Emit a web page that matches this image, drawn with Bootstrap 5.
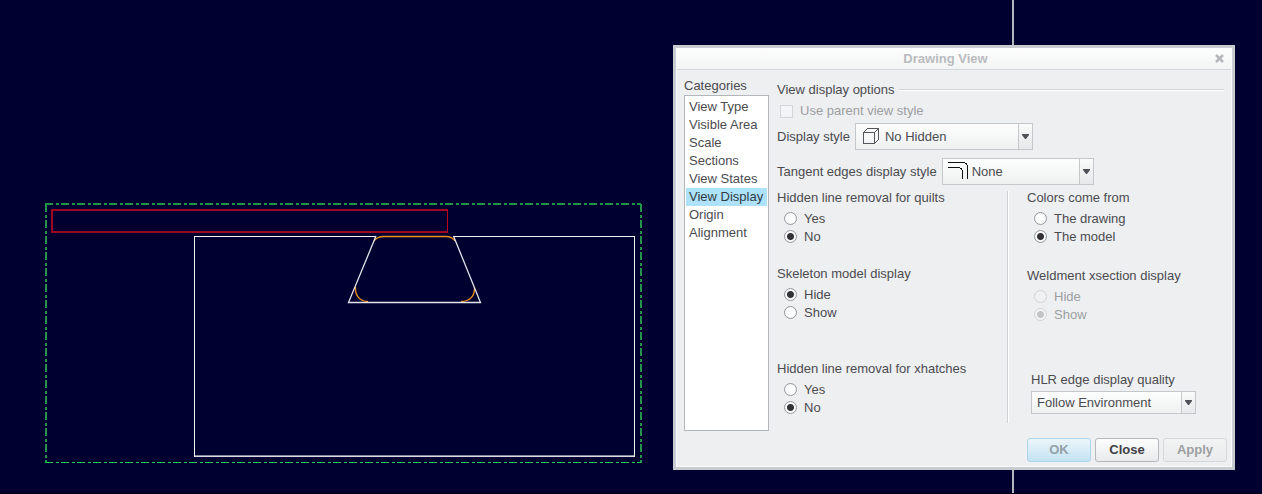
<!DOCTYPE html>
<html lang="en">
<head>
<meta charset="utf-8">
<meta name="viewport" content="width=device-width, initial-scale=1">
<title>Drawing View</title>
<link href="https://cdn.jsdelivr.net/npm/bootstrap@5.3.0/dist/css/bootstrap.min.css" rel="stylesheet">
<style>
  body { background: #000030; color: #4b4b50; font: 13px/18px "Liberation Sans", Arial, sans-serif; }
  .sheet { border-bottom: 1px solid #00000c; }
  .sheet-art { inset: 0; }
  .dialog-window { left: 673px; top: 45px; width: 562px; background: #eeeff1; border: 3px solid #c8ccd0; box-shadow: inset 0 0 0 1px #fafbfb; }
  .title-bar { height: 22px; margin: 0 1px; background: linear-gradient(#fdfdfd, #f3f4f4); border-bottom: 1px solid #d5d8da; color: #b9bbbf; }
  .title-bar h1 { font-size: 13px; line-height: 22px; }
  .close-x { width: 17px; border: 0; background: none; }
  .dialog-main { gap: 8px; padding: 7px 8px 7px; }
  .category-pane { width: 85px; }
  .category-list { min-height: 336px; background: #fff; border: 1px solid #b3b7bb; border-radius: 0; padding: 2px 1px; }
  .category-list .list-group-item { padding: 0 0 0 3px; border: 0; border-radius: 0; line-height: 18px; color: inherit; background: none; white-space: nowrap; }
  .category-list .list-group-item.active { background: #aee1fa; color: #2f3c45; margin: 0; }
  .options-pane { padding-top: 4px; }
  .etched-line { height: 2px; margin-left: 4px; background: linear-gradient(#d3d6d9 50%, #fff 50%); }
  .faded { color: #9c9ea1; }
  .parent-style { margin-top: 3px; padding-left: 3px; gap: 7px; }
  .box-input { width: 13px; height: 13px; margin: 0; border: 1px solid #d3d6d8; border-radius: 0 !important; background: #f3f4f5; opacity: 1 !important; }
  .style-row { gap: 5px; height: 27px; }
  .row-a { margin-top: 3px; }
  .row-b { margin-top: 8px; }
  .combo { height: 27px; padding: 0 18px 0 29px; border: 1px solid #c4c8cb; border-radius: 0; color: #4b4b50; font-size: 13px; line-height: 18px;
    background-color: #f6f7f7;
    background-image: url("data:image/svg+xml,%3Csvg xmlns='http://www.w3.org/2000/svg' width='7' height='5'%3E%3Cpath d='M0 0h7v1L4 5H3L0 1z' fill='%234f5158'/%3E%3C/svg%3E"), linear-gradient(#c4c8cb, #c4c8cb), linear-gradient(#fafafa, #e6e8ea), linear-gradient(#fdfdfd, #eff1f1);
    background-repeat: no-repeat; background-size: 7px 5px, 1px 100%, 13px 100%, 100% 100%; background-position: right 3px center, right 13px top, right 0 top, 0 0; }
  .combo-a { width: 178px; }
  .combo-b { width: 152px; }
  .combo-c { width: 165px; height: 23px; padding-left: 5px; }
  .combo-icon { left: 6px; top: 3px; pointer-events: none; }
  .group-columns { margin-top: 3px; }
  .group-left { width: 230px; }
  .group-right { border-left: 1px solid #cfd2d5; box-shadow: inset 1px 0 #fff; padding-left: 19px; margin-top: 3px; height: 232px; }
  .group-right .first-group { margin-top: -3px; }
  .option-group legend { font-size: 13px; line-height: 18px; padding-top: 1px; margin-bottom: 2px; }
  .option-group .choice { height: 18px; padding-left: 7px; gap: 7px; }
  .option-group .choice label { padding-top: 2px; }
  .dot-input { width: 13px; height: 13px; margin: 0; border: 1px solid #96999d; background: radial-gradient(#fff 40%, #eceded); opacity: 1 !important; }
  .dot-input:checked { border-color: #96999d; background: radial-gradient(circle at 50% 50%, #333337 0 3px, #fafafa 4px 5px, #eee); }
  .dot-input:disabled { border-color: #d0d3d5; background: #f0f1f2; }
  .dot-input:disabled:checked { background: radial-gradient(circle at 50% 50%, #c2c4c6 0 3px, #f3f4f5 4px); }
  .space-s { margin-top: 19px; }
  .space-m { margin-top: 21px; }
  .space-l { margin-top: 38px; }
  .space-xl { margin-top: 48px; padding-left: 4px; }
  .space-xl label { margin-bottom: 2px; }
  .dialog-foot { gap: 4px; padding: 0 5px 5px; }
  .dialog-foot .btn { width: 64px; height: 24px; padding: 0; border: 1px solid #b4b8bb; border-radius: 3px; font-size: 13px; font-weight: bold; line-height: 22px; color: #3f4045; background: linear-gradient(#fdfdfd, #e8eaeb); opacity: 1; }
  .dialog-foot .ok { border-color: #aed6ea; color: #94a0a8; background: linear-gradient(#ebf5fa, #c4e3f3); }
  .dialog-foot .apply { border-color: #d5d8da; color: #9c9ea1; background: linear-gradient(#f2f3f3, #e9ebec); }
</style>
</head>
<body>
<main class="sheet position-relative vh-100 overflow-hidden">
  <svg class="sheet-art position-absolute w-100 h-100" fill="none" shape-rendering="crispEdges" role="img" aria-label="Part drawing">
    <path d="M1013 0V494" stroke="#b4b5bd" stroke-width="2"/>
    <g stroke-dasharray="8 3 3 2" >
      <path d="M45 204H641" stroke="#229247" stroke-width="2"/>
      <path d="M46 204V463M641 204V463" stroke="#22964a" stroke-width="2"/>
      <path d="M45 462.500H641" stroke="#27c857"/>
    </g>
    <path d="M51 210H448M51 232H448" stroke="#9e0622" stroke-width="2"/>
    <path d="M52 209V232" stroke="#9e0622" stroke-width="2"/>
    <path d="M447.500 209V233" stroke="#b8061c"/>
    <path d="M376 236.500H194.500V456M453 236.500H634.500V456" stroke="#f4f4f8"/>
    <path d="M195 455.500H634" stroke="#85869a"/>
    <path d="M194 456.500H635" stroke="#dcdce2"/>
    <g shape-rendering="auto">
      <path d="M374 241Q377 236.500 384 236.500H446Q452 236.500 455 241M355.500 287C355 296 360 301.500 368 301.500M474.500 287C475 296 470 301.500 461 301.500" stroke="#ee9119" stroke-width="1.300"/>
      <path d="M376 236L348.500 302.500H480.500L453.500 236" stroke="#e4e4ea" stroke-width="1.300"/>
    </g>
  </svg>

  <form class="dialog-window position-absolute" aria-label="Drawing View" onsubmit="return false">
    <header class="title-bar d-flex align-items-stretch">
      <h1 class="flex-grow-1 text-center fw-bold m-0">Drawing View</h1>
      <button type="button" class="close-x p-0 d-flex align-items-center" aria-label="Close window">
        <svg width="11" height="9" viewBox="0 0 11 9"><path d="M2 1L9 8M9 1L2 8" stroke="#b5b7bb" stroke-width="2.500"/></svg>
      </button>
    </header>
    <div class="dialog-main d-flex">
      <section class="category-pane d-flex flex-column flex-shrink-0">
        <span id="cats">Categories</span>
        <div class="category-list list-group flex-grow-1" aria-labelledby="cats">
          <button type="button" class="list-group-item list-group-item-action">View Type</button>
          <button type="button" class="list-group-item list-group-item-action">Visible Area</button>
          <button type="button" class="list-group-item list-group-item-action">Scale</button>
          <button type="button" class="list-group-item list-group-item-action">Sections</button>
          <button type="button" class="list-group-item list-group-item-action">View States</button>
          <button type="button" class="list-group-item list-group-item-action active">View Display</button>
          <button type="button" class="list-group-item list-group-item-action">Origin</button>
          <button type="button" class="list-group-item list-group-item-action">Alignment</button>
        </div>
      </section>
      <section class="options-pane flex-grow-1">
        <div class="d-flex align-items-center"><span>View display options</span><div class="etched-line flex-grow-1"></div></div>
        <div class="parent-style d-flex align-items-center faded">
          <input class="form-check-input box-input" type="checkbox" id="parent" disabled><label for="parent">Use parent view style</label>
        </div>
        <div class="style-row row-a d-flex align-items-center">
          <label for="dstyle">Display style</label>
          <div class="position-relative">
            <select class="form-select combo combo-a" id="dstyle"><option>No Hidden</option></select>
            <svg class="combo-icon position-absolute" width="20" height="20" fill="none" stroke="#55565b" shape-rendering="crispEdges"><path d="M2.500 6.500H13.500V17.500H2.500ZM6.500 2.500H17.500V13.500"/><path d="M2.500 6.500L6.500 2.500M13.500 6.500L17.500 2.500M13.500 17.500L17.500 13.500"/></svg>
          </div>
        </div>
        <div class="style-row row-b d-flex align-items-center">
          <label for="tstyle">Tangent edges display style</label>
          <div class="position-relative">
            <select class="form-select combo combo-b" id="tstyle"><option>None</option></select>
            <svg class="combo-icon position-absolute" width="22" height="20" fill="none" stroke="#111" shape-rendering="crispEdges"><path d="M0 1.500H15Q19.500 1.500 19.500 6V18M0 6.500H10Q14.500 6.500 14.500 11V18"/></svg>
          </div>
        </div>
        <div class="group-columns d-flex">
          <div class="group-left">
            <fieldset class="option-group">
              <legend>Hidden line removal for quilts</legend>
              <div class="choice d-flex align-items-center"><input class="form-check-input dot-input" type="radio" name="quilts" id="q1"><label for="q1">Yes</label></div>
              <div class="choice d-flex align-items-center"><input class="form-check-input dot-input" type="radio" name="quilts" id="q2" checked><label for="q2">No</label></div>
            </fieldset>
            <fieldset class="option-group space-s">
              <legend>Skeleton model display</legend>
              <div class="choice d-flex align-items-center"><input class="form-check-input dot-input" type="radio" name="skel" id="s1" checked><label for="s1">Hide</label></div>
              <div class="choice d-flex align-items-center"><input class="form-check-input dot-input" type="radio" name="skel" id="s2"><label for="s2">Show</label></div>
            </fieldset>
            <fieldset class="option-group space-l">
              <legend>Hidden line removal for xhatches</legend>
              <div class="choice d-flex align-items-center"><input class="form-check-input dot-input" type="radio" name="hatch" id="x1"><label for="x1">Yes</label></div>
              <div class="choice d-flex align-items-center"><input class="form-check-input dot-input" type="radio" name="hatch" id="x2" checked><label for="x2">No</label></div>
            </fieldset>
          </div>
          <div class="group-right flex-grow-1">
            <fieldset class="option-group first-group">
              <legend>Colors come from</legend>
              <div class="choice d-flex align-items-center"><input class="form-check-input dot-input" type="radio" name="colors" id="c1"><label for="c1">The drawing</label></div>
              <div class="choice d-flex align-items-center"><input class="form-check-input dot-input" type="radio" name="colors" id="c2" checked><label for="c2">The model</label></div>
            </fieldset>
            <fieldset class="option-group space-m">
              <legend>Weldment xsection display</legend>
              <div class="choice d-flex align-items-center"><input class="form-check-input dot-input" type="radio" name="weld" id="w1" disabled><label class="faded" for="w1">Hide</label></div>
              <div class="choice d-flex align-items-center"><input class="form-check-input dot-input" type="radio" name="weld" id="w2" checked disabled><label class="faded" for="w2">Show</label></div>
            </fieldset>
            <div class="space-xl">
              <label class="d-block" for="hlr">HLR edge display quality</label>
              <select class="form-select combo combo-c" id="hlr"><option>Follow Environment</option></select>
            </div>
          </div>
        </div>
      </section>
    </div>
    <footer class="dialog-foot d-flex justify-content-end">
      <button type="button" class="btn ok" disabled>OK</button>
      <button type="button" class="btn">Close</button>
      <button type="button" class="btn apply" disabled>Apply</button>
    </footer>
  </form>
</main>
<script src="https://cdn.jsdelivr.net/npm/bootstrap@5.3.0/dist/js/bootstrap.bundle.min.js"></script>
</body>
</html>
